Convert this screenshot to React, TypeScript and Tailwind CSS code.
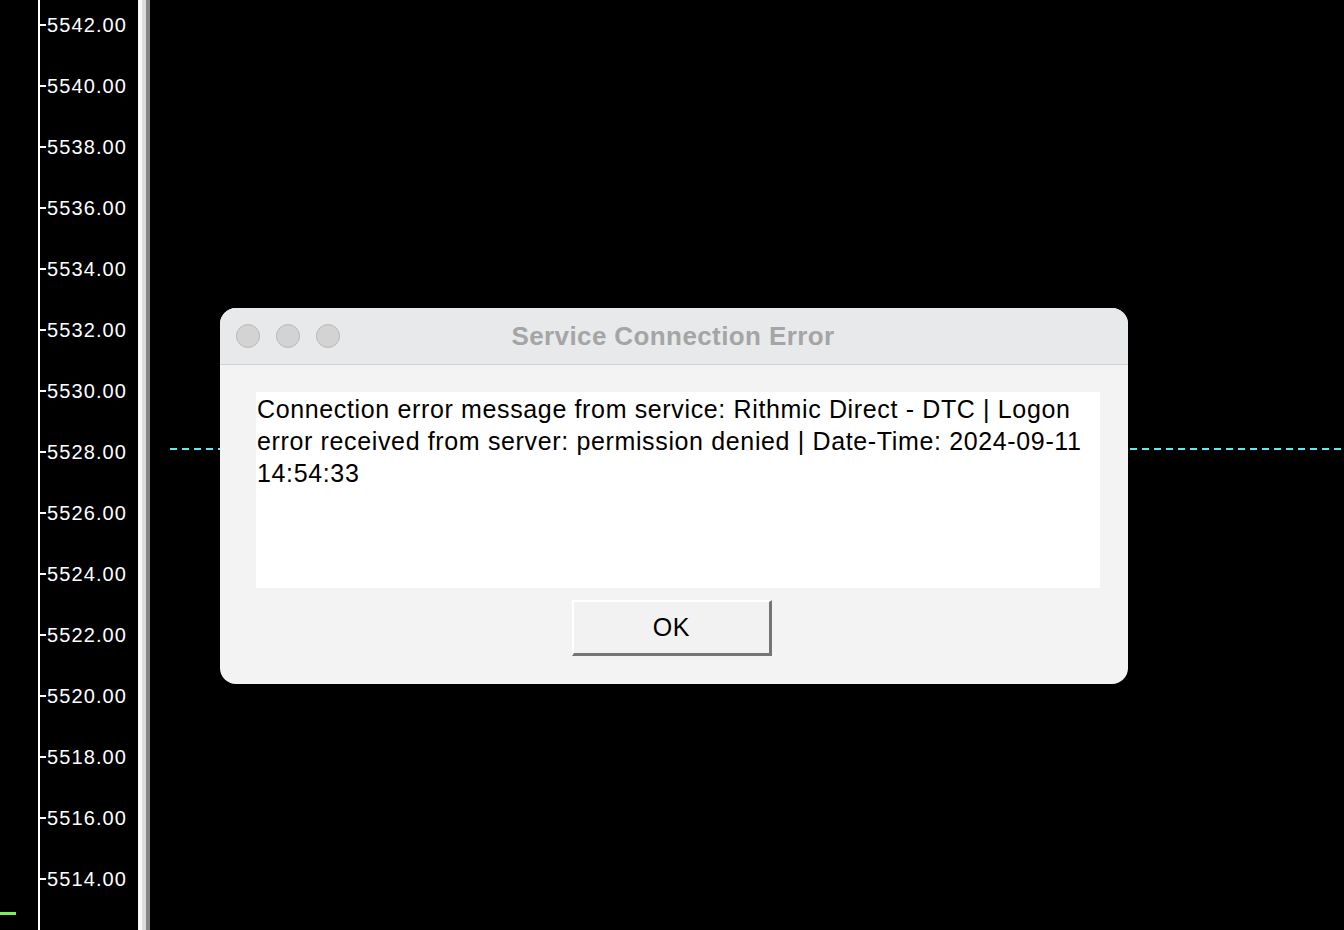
const prices = [
  "5542.00",
  "5540.00",
  "5538.00",
  "5536.00",
  "5534.00",
  "5532.00",
  "5530.00",
  "5528.00",
  "5526.00",
  "5524.00",
  "5522.00",
  "5520.00",
  "5518.00",
  "5516.00",
  "5514.00",
];

function PriceAxis() {
  return (
    <div className="flex h-full shrink-0">
      <div className="relative w-[38px] h-full">
        <div className="absolute left-0 top-[912px] w-[16px] h-[3px] bg-[#7cf05c]" />
      </div>
      <div className="w-[2px] h-full bg-white" />
      <div className="w-[98px] h-full overflow-hidden">
        <div className="flex flex-col -mt-[6px]">
          {prices.map((p) => (
            <div key={p} className="flex items-center h-[61px]">
              <div className="w-[6px] h-[2px] bg-white" />
              <span className="ml-[1px] text-white text-[20px] tracking-[1.1px] leading-none font-['Liberation_Sans',Arial,sans-serif]">
                {p}
              </span>
            </div>
          ))}
        </div>
      </div>
      <div className="w-[4px] h-full bg-[#fafafa]" />
      <div className="w-[4px] h-full bg-[#dcdcdc]" />
      <div className="w-[4px] h-full bg-[#858585]" />
    </div>
  );
}

function TrafficDot() {
  return <div className="w-[24px] h-[24px] rounded-full bg-[#d3d3d3] border border-[#b9b9b9]" />;
}

function ErrorDialog() {
  return (
    <div className="absolute left-[220px] top-[308px] w-[908px] h-[376px] rounded-[16px] overflow-hidden bg-[#f3f3f3] flex flex-col">
      <div className="relative h-[57px] shrink-0 bg-[#e8e9eb] border-b border-[#d2d2d2] flex items-center">
        <div className="flex gap-[16px] pl-[16px]">
          <TrafficDot />
          <TrafficDot />
          <TrafficDot />
        </div>
        <div className="absolute inset-0 flex items-center justify-center pr-[2px] text-[#a5a5a5] text-[26px] tracking-[0.4px] font-bold font-['Liberation_Sans',Arial,sans-serif]">
          Service Connection Error
        </div>
      </div>
      <div className="flex-1 flex flex-col items-center pt-[27px] pl-[36px] pr-[28px]">
        <div className="w-full h-[196px] bg-white pl-[1px] pt-[1px] text-black text-[25px] leading-[32px] tracking-[0.64px] font-['Liberation_Sans',Arial,sans-serif]">
          Connection error message from service: Rithmic Direct - DTC | Logon
          <br />
          error received from server: permission denied | Date-Time: 2024-09-11
          <br />
          14:54:33
        </div>
        <button className="mt-[12px] ml-[-12px] w-[200px] h-[56px] bg-[#f2f2f2] border-t-2 border-l-2 border-t-white border-l-white border-r-[3px] border-b-[3px] border-r-[#757575] border-b-[#757575] text-black text-[25px] tracking-[0.6px] font-['Liberation_Sans',Arial,sans-serif]">
          OK
        </button>
      </div>
    </div>
  );
}

export default function App() {
  return (
    <div className="relative w-[1344px] h-[930px] bg-black overflow-hidden flex">
      <PriceAxis />
      <div className="relative flex-1 h-full">
        <div className="absolute left-[20px] right-0 top-[448px] h-[2px] bg-[repeating-linear-gradient(90deg,#5ee8ef_0px,#5ee8ef_7px,transparent_7px,transparent_12px)]" />
      </div>
      <ErrorDialog />
    </div>
  );
}
